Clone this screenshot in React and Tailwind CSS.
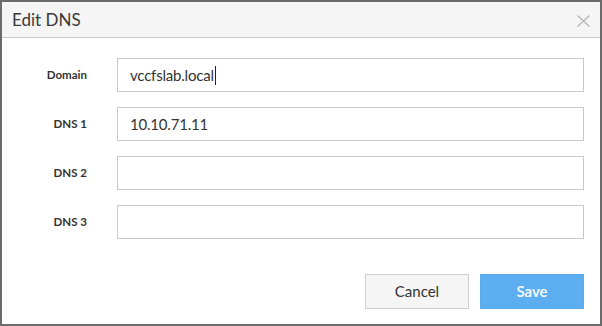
export default function App() {
  const rows = [
    { label: "Domain", value: "vccfslab.local", caret: true },
    { label: "DNS 1", value: "10.10.71.11" },
    { label: "DNS 2", value: "" },
    { label: "DNS 3", value: "" },
  ];
  return (
    <div
      className="w-[602px] h-[326px] border-2 border-[#6b6b6b] bg-white flex flex-col"
      style={{ fontFamily: "Lato, 'Open Sans', sans-serif" }}
    >
      <div className="h-[36px] bg-[#f5f5f5] border-b border-[#c8c8c8] flex items-center justify-between pl-[10px] pr-[10px] shrink-0">
        <span className="text-[17px] text-[#3a3a3a] leading-none">Edit DNS</span>
        <svg width="13" height="12" viewBox="0 0 13 12" className="mt-[2px]">
          <path d="M0.5 0.5 L12.5 11.5 M12.5 0.5 L0.5 11.5" stroke="#b5b5b5" strokeWidth="1.2" fill="none" />
        </svg>
      </div>
      <div className="flex flex-col gap-[15px] pt-[20px] pr-[16px]">
        {rows.map((r) => (
          <div key={r.label} className="flex items-center">
            <div className="w-[86px] text-right text-[11.5px] font-bold text-[#333] pr-[1px]">{r.label}</div>
            <div className="ml-[29px] flex-1 h-[34px] border border-[#c9c9c9] flex items-center pl-[12px] text-[15px] text-[#333] tracking-[-0.2px]">
              {r.value}
              {r.caret && <span className="inline-block w-[1px] h-[19px] bg-[#222] ml-[1px]" />}
            </div>
          </div>
        ))}
      </div>
      <div className="flex justify-end gap-[11px] pr-[16px] mt-[35px]">
        <button className="w-[104px] h-[35px] bg-[#f5f5f5] border border-[#cfcfcf] text-[15px] text-[#333]">Cancel</button>
        <button className="w-[104px] h-[35px] bg-[#5caef0] border border-[#5aa9ea] text-[15px] font-semibold text-white">Save</button>
      </div>
    </div>
  );
}
